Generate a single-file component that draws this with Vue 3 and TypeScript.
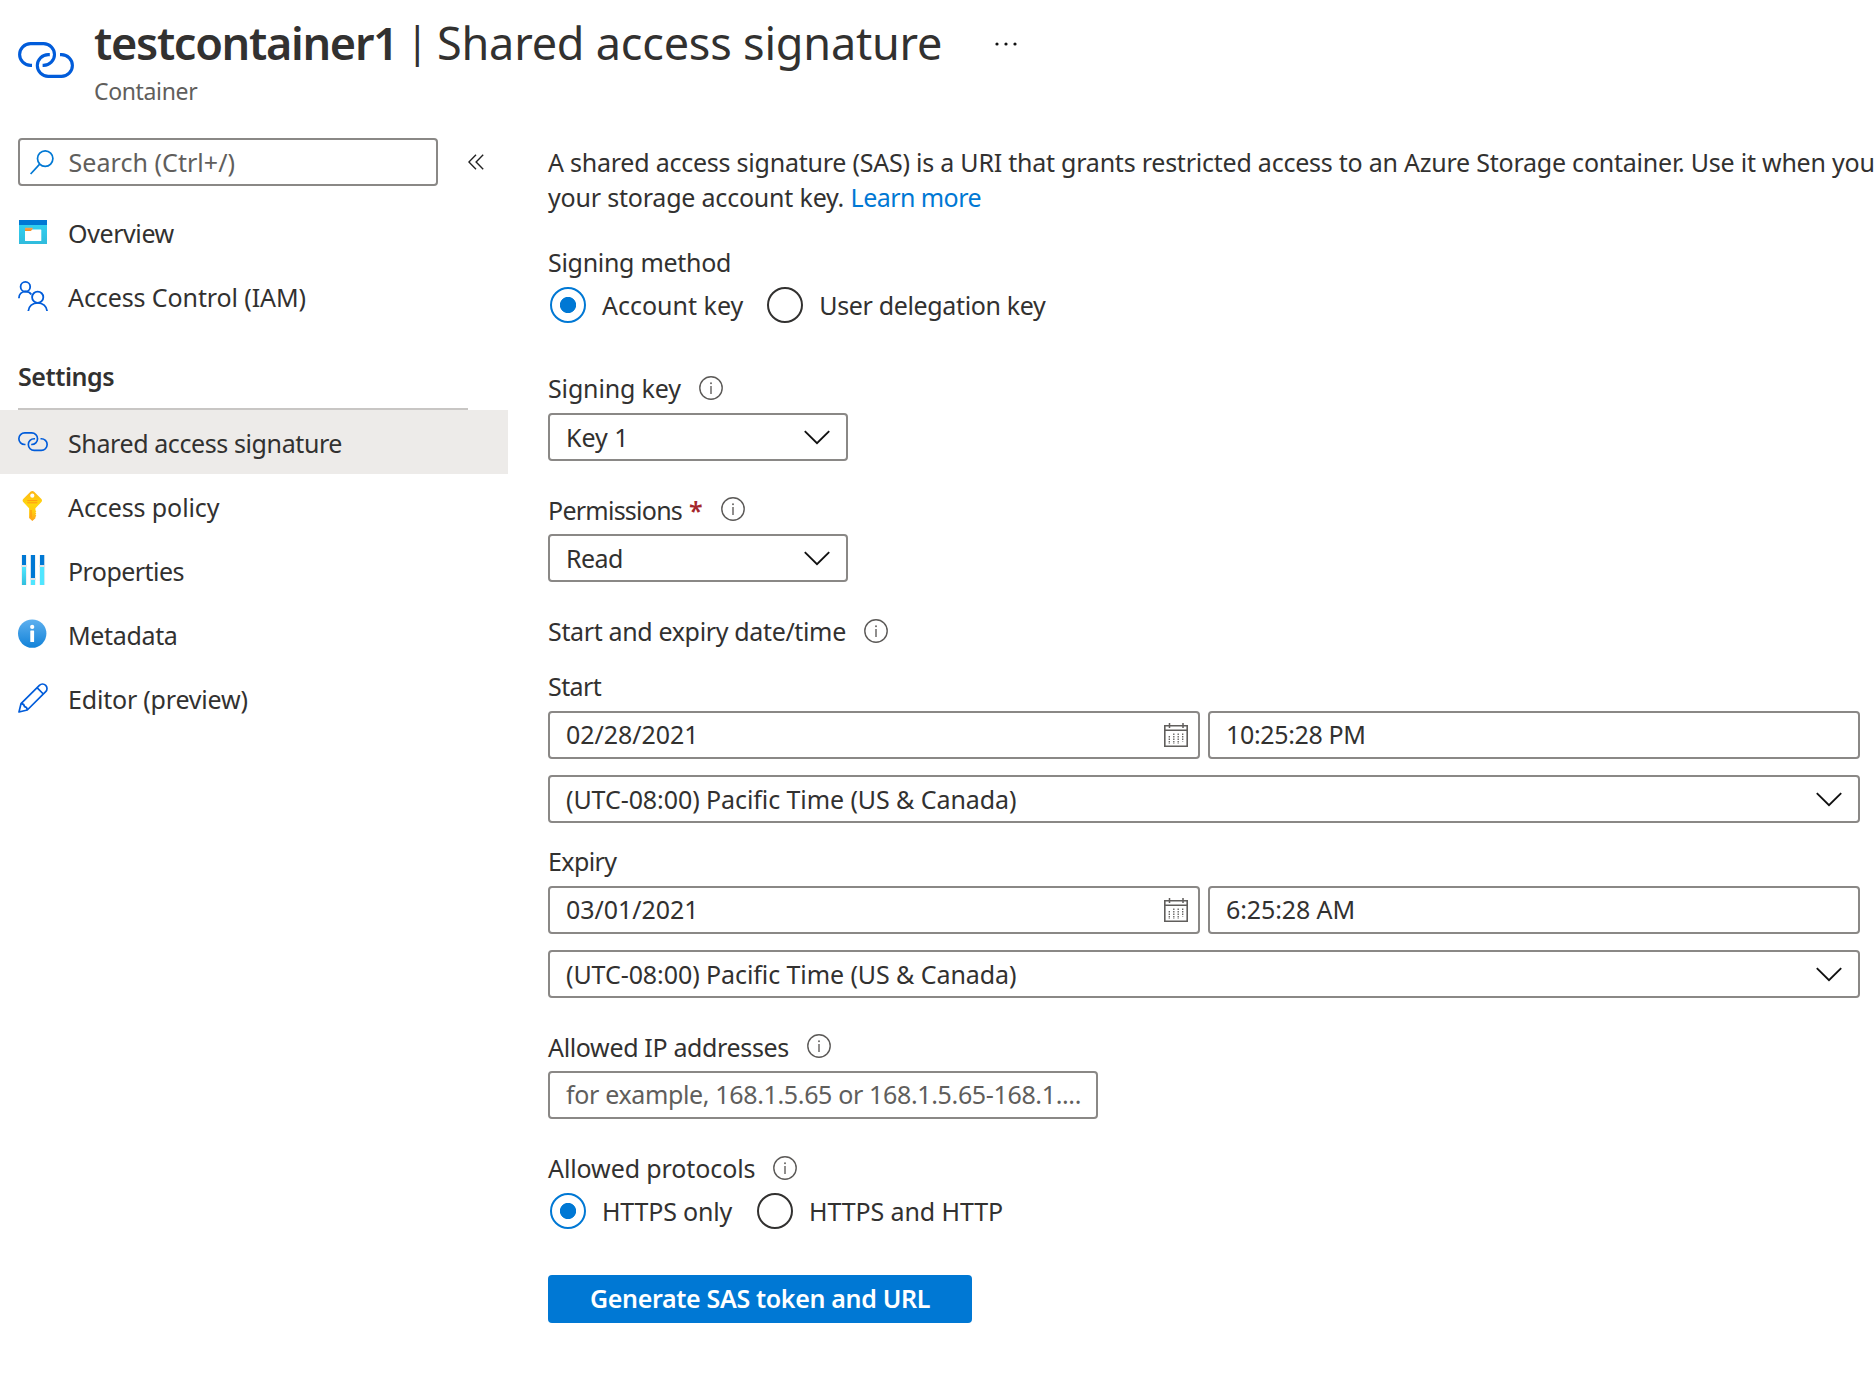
<script setup lang="ts">
import { ref, h, type FunctionalComponent } from 'vue'

interface NavItem {
  id: string
  label: string
  spacing: string
}

const topItems: NavItem[] = [
  { id: 'overview', label: 'Overview', spacing: 'ls-40' },
  { id: 'iam', label: 'Access Control (IAM)', spacing: 'ls-10' },
]

const settingsItems: NavItem[] = [
  { id: 'sas', label: 'Shared access signature', spacing: 'ls-40' },
  { id: 'policy', label: 'Access policy', spacing: 'ls-10' },
  { id: 'properties', label: 'Properties', spacing: 'ls-55' },
  { id: 'metadata', label: 'Metadata', spacing: 'ls-35' },
  { id: 'editor', label: 'Editor (preview)', spacing: 'ls-20' },
]

const timezone = '(UTC-08:00) Pacific Time (US & Canada)'
const selected = ref('sas')
const method = ref('account')
const protocol = ref('https')

const periods = [
  { label: 'Start', date: '02/28/2021', time: '10:25:28 PM', timeSpacing: 'ls-35' },
  { label: 'Expiry', date: '03/01/2021', time: '6:25:28 AM', timeSpacing: 'ls-10' },
]

const InfoIcon: FunctionalComponent = () =>
  h('svg', { width: 24, height: 24, viewBox: '0 0 24 24', fill: 'none' }, [
    h('circle', { cx: 12, cy: 12, r: 11.2, stroke: '#5c5a58', 'stroke-width': 1.4 }),
    h('path', { d: 'M12 10v8', stroke: '#6b6967', 'stroke-width': 1.5 }),
    h('circle', { cx: 12, cy: 7.3, r: 1, fill: '#6b6967' }),
  ])

const Chevron: FunctionalComponent = () =>
  h('svg', { width: 26, height: 15, viewBox: '0 0 26 15', fill: 'none' }, [
    h('path', { d: 'M.8 1.1 13 13.2 25.2 1.1', stroke: '#111', 'stroke-width': 1.9 }),
  ])

const LinkIcon: FunctionalComponent<{ width: number; color: string }> = (props) =>
  h(
    'svg',
    {
      width: props.width,
      height: (props.width * 36) / 56,
      viewBox: '0 0 56 36',
      fill: 'none',
      stroke: props.color,
      'stroke-width': 3.1,
    },
    [
      h('path', { d: 'M14 23.4H12.5A10.9 10.9 0 0 1 12.5 1.6H25.6A10.9 10.9 0 0 1 25.6 23.4H24.6' }),
      h('path', { d: 'M42 12.6H43.5A10.9 10.9 0 0 1 43.5 34.4H30.2A10.9 10.9 0 0 1 30.2 12.6H31.8' }),
    ],
  )
LinkIcon.props = ['width', 'color']
</script>

<template>
  <div class="blade">
    <header class="header">
      <LinkIcon class="header-icon" :width="56" color="#015cda" />
      <div>
        <h1 class="title">
          <b>testcontainer1</b><span class="bar">|</span><span class="page">Shared access signature</span>
          <svg class="more" width="24" height="6" viewBox="0 0 24 6" fill="#111">
            <circle cx="3" cy="3" r="1.6" /><circle cx="12" cy="3" r="1.6" /><circle cx="21" cy="3" r="1.6" />
          </svg>
        </h1>
        <div class="subtitle">Container</div>
      </div>
    </header>

    <div class="body">
      <nav class="sidebar">
        <div class="search-row">
          <div class="search">
            <svg width="24" height="25" viewBox="0 0 24 25" fill="none" stroke="#0078d4" stroke-width="1.7">
              <circle cx="15.2" cy="8.6" r="7.7" />
              <path d="M9.7 14.2.6 24" />
            </svg>
            <span class="loose">Search (Ctrl+/)</span>
          </div>
          <svg class="collapse" width="16" height="16" viewBox="0 0 16 16" fill="none" stroke="#222" stroke-width="1.4">
            <path d="M8 .8.9 8 8 15.2M15.2.8 8.1 8l7.1 7.2" />
          </svg>
        </div>

        <div v-for="item in topItems" :key="item.id" class="nav-item">
          <svg v-if="item.id === 'overview'" width="30" height="30" viewBox="0 0 30 30">
            <defs>
              <linearGradient id="ov" x1="0" y1="0" x2="0" y2="1">
                <stop offset="0" stop-color="#32d4f5" />
                <stop offset="1" stop-color="#30bbdc" />
              </linearGradient>
              <linearGradient id="tab" x1="0" y1="0" x2="0" y2="1">
                <stop offset="0" stop-color="#f7a35a" />
                <stop offset="1" stop-color="#f78d1e" />
              </linearGradient>
            </defs>
            <rect x="1" y="3" width="28" height="24" fill="url(#ov)" />
            <rect x="1" y="3" width="28" height="5" fill="#0078d4" />
            <path d="M14 12.500h8.800q.5 0 .5.5v10.500q0 .5-.5.5H7.500q-.5 0-.5-.5V12.500z" fill="#fff" />
            <path d="M7 11.400q0-.6.6-.6h6.600q.6 0 .6.6l-1 1.600-1 .9H7z" fill="url(#tab)" />
          </svg>
          <svg v-else width="30" height="30" viewBox="0 0 30 30" fill="none" stroke="#015cda" stroke-width="1.8">
            <circle cx="7.4" cy="5.7" r="4.8" />
            <path d="M.9 17.200c0-4 2.800-6.600 6.600-6.600 2.500 0 4.600 1 5.800 2.800" />
            <circle cx="19.7" cy="16.2" r="5.6" />
            <path d="M10.300 30c.3-4.700 4.300-8.200 9.400-8.200s9 3.500 9.400 8.200" />
          </svg>
          <span :class="item.spacing">{{ item.label }}</span>
        </div>

        <div class="section">Settings</div>

        <div
          v-for="item in settingsItems"
          :key="item.id"
          class="nav-item"
          :class="{ selected: item.id === selected }"
          @click="selected = item.id"
        >
          <LinkIcon v-if="item.id === 'sas'" :width="30" color="#015cda" />
          <svg v-else-if="item.id === 'policy'" width="30" height="30" viewBox="0 0 30 30">
            <defs>
              <linearGradient id="key" x1="0" y1="0" x2="0" y2="1">
                <stop offset="0" stop-color="#fdb515" />
                <stop offset=".45" stop-color="#ffd70f" />
                <stop offset=".7" stop-color="#ffcb12" />
                <stop offset="1" stop-color="#fea11b" />
              </linearGradient>
            </defs>
            <path
              d="M12.700.6q1.600-1.200 3.200 0l7.500 7.500q1.200 1.400 0 2.800l-6 6.300v2l.9 1-.9 1.100.9 1.200-.9 1.100.9 1.200-.9 1.200v1.200L14.300 30l-3.200-3V17.200L5.200 10.900q-1.200-1.400 0-2.800z"
              fill="url(#key)"
            />
            <circle cx="14.300" cy="4.700" r="2.100" fill="#fff" />
            <path d="M9.300 9.600h10M9.300 11.800h10" stroke="#ff9a14" stroke-width="1" />
            <path d="M13 19v7.500" stroke="#ff9a14" stroke-width="1.300" />
          </svg>
          <svg v-else-if="item.id === 'properties'" width="30" height="30" viewBox="0 0 30 30">
            <defs>
              <linearGradient id="prop" x1="0" y1="0" x2="0" y2="1">
                <stop offset="0" stop-color="#50e6ff" />
                <stop offset="1" stop-color="#32bedd" />
              </linearGradient>
            </defs>
            <path d="M3.300 0h5.400v30H3.300zM12.200 0h5.500v30h-5.500zM21.300 0h5.800v30h-5.800z" fill="#e9edf0" />
            <path d="M4 0h4v10H4zM12.900 0H17v23h-4.100zM22 0h4.200v10H22z" fill="#0078d4" />
            <path d="M4 12h4v18H4z" fill="url(#prop)" />
            <path d="M12.900 25H17v5h-4.100zM22 12h4.200v18H22z" fill="#50e6ff" />
            <path d="M3.300 10.200h5.400v1.500H3.300zM12.200 23.200h5.500v1.500h-5.500zM21.300 10.200h5.800v1.500h-5.800z" fill="#dcdfe3" />
          </svg>
          <svg v-else-if="item.id === 'metadata'" width="30" height="30" viewBox="0 0 30 30">
            <defs>
              <linearGradient id="meta" x1="0" y1="0" x2="0" y2="1">
                <stop offset="0" stop-color="#5eb0ef" />
                <stop offset="1" stop-color="#1282d8" />
              </linearGradient>
            </defs>
            <circle cx="14.200" cy="14.600" r="14.200" fill="url(#meta)" />
            <circle cx="14.200" cy="7.900" r="2.100" fill="#fff" />
            <rect x="12.300" y="11.500" width="3.800" height="11.600" rx=".6" fill="#fff" />
          </svg>
          <svg v-else width="30" height="30" viewBox="0 0 30 30" fill="none" stroke="#015cda" stroke-width="1.700" stroke-linejoin="round">
            <path d="M1 29 3 20.600 21.400 2.300a4.400 4.400 0 0 1 6.300 6.300L9.300 27z" />
            <path d="M3 20.600q3.300.2 3.500 3 2.600.4 2.800 3.400M19 4.700l6.300 6.300" />
          </svg>
          <span :class="item.spacing">{{ item.label }}</span>
        </div>
      </nav>

      <main class="main">
        <p class="intro">
          <span class="line first">A shared access signature (SAS) is a URI that grants restricted access to an Azure Storage container. Use it when you</span>
          <span class="line"><span class="ls-20">your storage account key.</span> <a class="ls-55">Learn more</a></span>
        </p>

        <div class="label"><span class="ls-30">Signing method</span></div>
        <div class="radios">
          <div class="radio" :class="{ on: method === 'account' }" @click="method = 'account'"><i></i><span>Account key</span></div>
          <div class="radio second" :class="{ on: method === 'user' }" @click="method = 'user'"><i></i><span class="ls-35">User delegation key</span></div>
        </div>

        <div class="label key-label"><span class="ls-15">Signing key</span><InfoIcon class="info" /></div>
        <div class="box short"><span>Key 1</span><Chevron /></div>

        <div class="label next"><span class="ls-75">Permissions</span><span class="star">*</span><InfoIcon class="info raised" /></div>
        <div class="box short read"><span class="ls-55">Read</span><Chevron /></div>

        <div class="label next"><span class="ls-35">Start and expiry date/time</span><InfoIcon class="info" /></div>

        <section v-for="p in periods" :key="p.label" class="period">
          <div class="label"><span class="ls-60">{{ p.label }}</span></div>
          <div class="pair">
            <div class="box up date">
              <span class="ls-5">{{ p.date }}</span>
              <svg width="24" height="24" viewBox="0 0 24 24" fill="none" stroke="#605e5c">
                <path d="M.8 2.700h22.400v20.500H.8z" stroke-width="1.600" />
                <path d="M.8 7.300h22.400M5.500 0v5M19 0v5" stroke-width="1.500" />
                <path d="M5.300 13v8M18.700 10.500v8" stroke-width="1.300" stroke-dasharray="1.500 1" />
                <path d="M9.800 10.500v10.500M14.200 10.500v10.500" stroke-width="1.300" stroke-dasharray="1.500 1" />
              </svg>
            </div>
            <div class="box up"><span :class="p.timeSpacing">{{ p.time }}</span></div>
          </div>
          <div class="box zone"><span class="ls-8">{{ timezone }}</span><Chevron /></div>
        </section>

        <div class="label next"><span class="ls-35">Allowed IP addresses</span><InfoIcon class="info raised" /></div>
        <div class="box ip up"><span class="placeholder">for example, 168.1.5.65 or 168.1.5.65-168.1....</span></div>

        <div class="label next"><span class="ls-10">Allowed protocols</span><InfoIcon class="info" /></div>
        <div class="radios protocols">
          <div class="radio" :class="{ on: protocol === 'https' }" @click="protocol = 'https'"><i></i><span class="ls-20">HTTPS only</span></div>
          <div class="radio second" :class="{ on: protocol === 'both' }" @click="protocol = 'both'"><i></i><span class="ls-10">HTTPS and HTTP</span></div>
        </div>

        <button class="generate">Generate SAS token and URL</button>
      </main>
    </div>
  </div>
</template>

<style>
body {
  margin: 0;
  background: #fff;
}
</style>

<style scoped>
.blade {
  box-sizing: border-box;
  width: 1876px;
  height: 1394px;
  overflow: hidden;
  background: #fff;
  color: #323130;
  font: 25px/36px 'Noto Sans', 'Open Sans', sans-serif;
  white-space: nowrap;
}
svg { display: block; flex: none; }
.ls-5 { letter-spacing: -0.05px; }
.ls-8 { letter-spacing: -0.08px; }
.ls-10 { letter-spacing: -0.1px; }
.ls-15 { letter-spacing: -0.15px; }
.ls-20 { letter-spacing: -0.2px; }
.ls-30 { letter-spacing: -0.3px; }
.ls-35 { letter-spacing: -0.35px; }
.ls-40 { letter-spacing: -0.4px; }
.ls-55 { letter-spacing: -0.55px; }
.ls-60 { letter-spacing: -0.6px; }
.ls-75 { letter-spacing: -0.75px; }
.loose { letter-spacing: 0.05px; }

.header { display: flex; height: 138px; padding-left: 18px; box-sizing: border-box; }
.header-icon { margin: 42px 20px 0 0; }
.title {
  display: flex;
  align-items: center;
  margin: 12.5px 0 0;
  height: 60px;
  font-size: 45px;
  line-height: 60px;
  font-weight: 400;
}
.title b { width: 312px; font-weight: 600; letter-spacing: -1.3px; }
.bar { width: 21px; font-size: 41px; text-align: center; line-height: 56px; height: 60px; }
.page { margin-left: 10px; letter-spacing: -0.2px; }
.more { margin-left: 52px; margin-top: 3px; }
.subtitle { margin-top: 2px; color: #605e5c; font-size: 23px; line-height: 32px; letter-spacing: -0.35px; }

.body { display: flex; }
.sidebar { width: 508px; flex: none; }
.search-row { display: flex; align-items: center; height: 48px; padding-left: 18px; margin-bottom: 14px; }
.search {
  box-sizing: border-box;
  display: flex;
  align-items: center;
  gap: 14.5px;
  width: 420px;
  height: 48px;
  padding-left: 10px;
  border: 2px solid #8a8886;
  border-radius: 4px;
  color: #605e5c;
}
.search span { margin-top: -1px; }
.collapse { margin-left: 30px; }
.nav-item { display: flex; align-items: center; height: 64px; padding-left: 18px; }
.nav-item span { margin: 2px 0 0 20px; }
.section {
  box-sizing: border-box;
  width: 450px;
  height: 82px;
  margin-left: 18px;
  padding-top: 30px;
  border-bottom: 2px solid #c8c6c4;
  font-weight: 600;
  letter-spacing: -0.45px;
}
.selected { background: #edebe9; }

.main { width: 1312px; margin-left: 40px; }
.intro { margin: 7px 0 29px; line-height: 35px; }
.line { display: block; }
.first { letter-spacing: -0.23px; }
.intro a { color: #0078d4; }
.label { display: flex; align-items: center; height: 36px; }
.info { margin-left: 18px; }
.raised { margin-top: -2px; }
.star { margin-left: 7px; color: #a4262c; font-weight: 600; }
.radios { display: flex; margin-top: 7px; height: 36px; }
.radio { display: flex; align-items: center; }
.radio i {
  box-sizing: border-box;
  width: 36px;
  height: 36px;
  margin: 0 16px 0 2px;
  border: 2px solid #323130;
  border-radius: 50%;
}
.radio.on i {
  border-color: #0078d4;
  background: radial-gradient(circle, #0078d4 7.7px, #fff 8.5px);
}
.second { margin-left: 22px; }
.protocols .second { margin-left: 23px; }
.key-label { margin-top: 47px; }
.next { margin-top: 31px; }
.box {
  box-sizing: border-box;
  display: flex;
  align-items: center;
  justify-content: space-between;
  height: 48px;
  margin-top: 7px;
  padding: 0 16px;
  border: 2px solid #8a8886;
  border-radius: 4px;
}
.up > span { margin-top: -2px; }
.short { width: 300px; }
.read { margin-top: 6px; }
.pair { display: grid; grid-template-columns: 652px 652px; gap: 8px; }
.date { padding-right: 10px; }
.zone { margin-top: 16px; }
.period { margin-top: 19px; }
.period + .period { margin-top: 20px; }
.ip { width: 550px; margin-top: 6px; }
.placeholder { color: #605e5c; letter-spacing: -0.35px; }
.generate {
  display: block;
  width: 424px;
  height: 48px;
  margin-top: 46px;
  padding: 0 0 3px;
  border: 0;
  border-radius: 4px;
  background: #0078d4;
  color: #fff;
  font: 600 25px/36px 'Noto Sans', 'Open Sans', sans-serif;
  letter-spacing: -0.34px;
}
</style>
